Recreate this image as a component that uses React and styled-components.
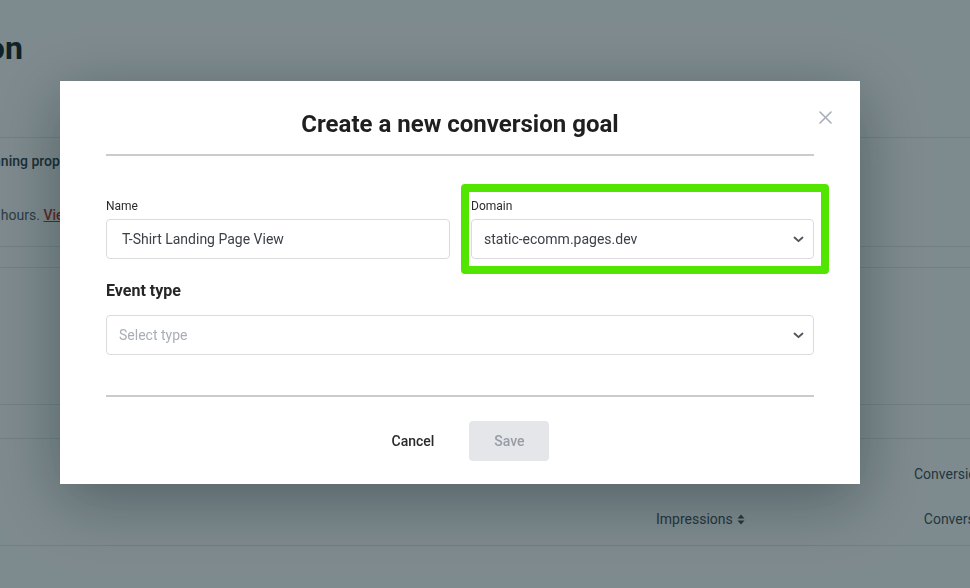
import React from 'react';
import styled, { createGlobalStyle } from 'styled-components';

const GlobalStyle = createGlobalStyle`
  html, body {
    margin: 0;
    padding: 0;
    width: 970px;
    height: 588px;
    overflow: hidden;
    background: #ffffff;
    font-family: Roboto, "Liberation Sans", Arial, sans-serif;
  }
  * { box-sizing: border-box; }
`;

const Page = styled.div`
  width: 970px;
  height: 588px;
  overflow: hidden;
  background: #fdfdfd;
  color: #1f2a30;
`;

const PageTitle = styled.h1`
  margin: 0;
  padding: 28px 0 0 0;
  margin-left: -140px;
  font-size: 32px;
  line-height: 40px;
  font-weight: 700;
  color: #1e2b31;
  white-space: nowrap;
`;

const Rule = styled.div`
  height: 1px;
  background: #e3e7ea;
  margin-top: ${p => p.$top}px;
`;

const Notice = styled.div`
  margin-left: ${p => p.$shift}px;
  margin-top: ${p => p.$top}px;
  font-size: 14px;
  line-height: 18px;
  font-weight: ${p => p.$bold ? 500 : 400};
  color: ${p => p.$bold ? '#3a464d' : '#56636a'};
  white-space: nowrap;

  a {
    color: #c23a1e;
    text-decoration: underline;
    font-weight: 500;
  }
`;

const TableHead = styled.div`
  display: flex;
  align-items: center;
  height: ${p => p.$h}px;
  font-size: 14px;
  color: #48555c;
  white-space: nowrap;
`;

const HeadCell = styled.span`
  margin-left: ${p => p.$left}px;
  display: inline-flex;
  align-items: center;
  gap: 4px;
`;

const Overlay = styled.div`
  position: fixed;
  inset: 0;
  background: rgba(0, 25, 32, 0.5);
  display: flex;
  align-items: flex-start;
  padding: 81px 0 0 60px;
`;

const Modal = styled.div`
  position: relative;
  width: 800px;
  background: #ffffff;
  padding: 29px 46px 23px;
  box-shadow: 0 16px 60px rgba(0, 20, 30, 0.35);
`;

const Title = styled.h2`
  margin: 0;
  text-align: center;
  font-size: 24px;
  line-height: 28px;
  font-weight: 700;
  color: #1f1f1f;
`;

const CloseButton = styled.button`
  position: absolute;
  top: 28px;
  right: 27px;
  width: 16px;
  height: 16px;
  padding: 0;
  border: none;
  background: none;
  cursor: pointer;
  display: flex;
  align-items: center;
  justify-content: center;
`;

const Divider = styled.div`
  height: 2px;
  background: #cbcbcb;
  margin-top: ${p => p.$top}px;
`;

const Row = styled.div`
  display: grid;
  grid-template-columns: 344px 343px;
  column-gap: 21px;
  margin-top: 42px;
`;

const Field = styled.div`
  position: relative;
  display: flex;
  flex-direction: column;
  gap: 4px;
`;

const Label = styled.label`
  font-size: 12px;
  line-height: 17px;
  color: #2b2b2b;
`;

const SectionLabel = styled.div`
  margin-top: 21px;
  font-size: 16px;
  line-height: 21px;
  font-weight: 700;
  color: #262626;
`;

const Input = styled.div`
  height: 40px;
  border: 1px solid #d9dbde;
  border-radius: 4px;
  padding: 0 15px;
  display: flex;
  align-items: center;
  font-size: 14px;
  color: #3c4148;
`;

const Select = styled.div`
  height: 40px;
  margin-top: ${p => p.$top || 0}px;
  border: 1px solid #d9dbde;
  border-radius: 4px;
  padding: 0 9px 0 12px;
  display: flex;
  align-items: center;
  justify-content: space-between;
  font-size: 14px;
  color: ${p => p.$placeholder ? '#a9aeb6' : '#3c4148'};
`;

const Highlight = styled.div`
  position: absolute;
  top: -14px;
  left: -10px;
  right: -15px;
  bottom: -15px;
  border: 8px solid #52e500;
  border-radius: 4px;
  pointer-events: none;
`;

const Actions = styled.div`
  display: flex;
  justify-content: center;
  gap: 14px;
  margin-top: 24px;
`;

const Button = styled.button`
  height: 40px;
  padding: 0 21px;
  min-width: ${p => p.$w}px;
  border: none;
  border-radius: 4px;
  font-family: inherit;
  font-size: 14px;
  font-weight: 500;
  background: ${p => p.$disabled ? '#e4e6e9' : 'transparent'};
  color: ${p => p.$disabled ? '#979ca5' : '#2a2a2a'};
  cursor: ${p => p.$disabled ? 'default' : 'pointer'};
`;

const Chevron = () => (
  <svg width="11" height="7" viewBox="0 0 11 7" fill="none">
    <path d="M1.5 1.5L5.5 5.2L9.5 1.5" stroke="#4b535e" strokeWidth="1.8" strokeLinecap="round" strokeLinejoin="round" />
  </svg>
);

const SortIcon = () => (
  <svg width="8" height="11" viewBox="0 0 8 11" fill="#48555c">
    <path d="M4 0.5L7.5 4.5H0.5Z" />
    <path d="M4 10.5L7.5 6.5H0.5Z" />
  </svg>
);

export default function App() {
  return (
    <>
      <GlobalStyle />
      <Page>
        <PageTitle>Conversion</PageTitle>
        <Rule $top={69} />
        <Notice $bold $shift={-165} $top={14}>Goals are attributed by running properties</Notice>
        <Notice $shift={-164} $top={36}>Data is refreshed every 24 hours. <a>View docs</a></Notice>
        <Rule $top={22} />
        <Rule $top={20} />
        <Rule $top={136} />
        <Rule $top={33} />
        <TableHead $h={70}>
          <HeadCell $left={914}>Conversions</HeadCell>
        </TableHead>
        <TableHead $h={20}>
          <HeadCell $left={656}>Impressions <SortIcon /></HeadCell>
          <HeadCell $left={179}>Conversions</HeadCell>
        </TableHead>
        <Rule $top={16} />
      </Page>

      <Overlay>
        <Modal>
          <Title>Create a new conversion goal</Title>
          <CloseButton aria-label="Close">
            <svg width="13" height="13" viewBox="0 0 13 13">
              <path d="M1 1L12 12M12 1L1 12" stroke="#a7adbb" strokeWidth="1.6" strokeLinecap="round" />
            </svg>
          </CloseButton>
          <Divider $top={16} />

          <Row>
            <Field>
              <Label>Name</Label>
              <Input>T-Shirt Landing Page View</Input>
            </Field>
            <Field>
              <Label>Domain</Label>
              <Select>
                static-ecomm.pages.dev
                <Chevron />
              </Select>
              <Highlight />
            </Field>
          </Row>

          <SectionLabel>Event type</SectionLabel>
          <Select $placeholder $top={14}>
            Select type
            <Chevron />
          </Select>

          <Divider $top={40} />

          <Actions>
            <Button $w={84}>Cancel</Button>
            <Button $w={80} $disabled>Save</Button>
          </Actions>
        </Modal>
      </Overlay>
    </>
  );
}
